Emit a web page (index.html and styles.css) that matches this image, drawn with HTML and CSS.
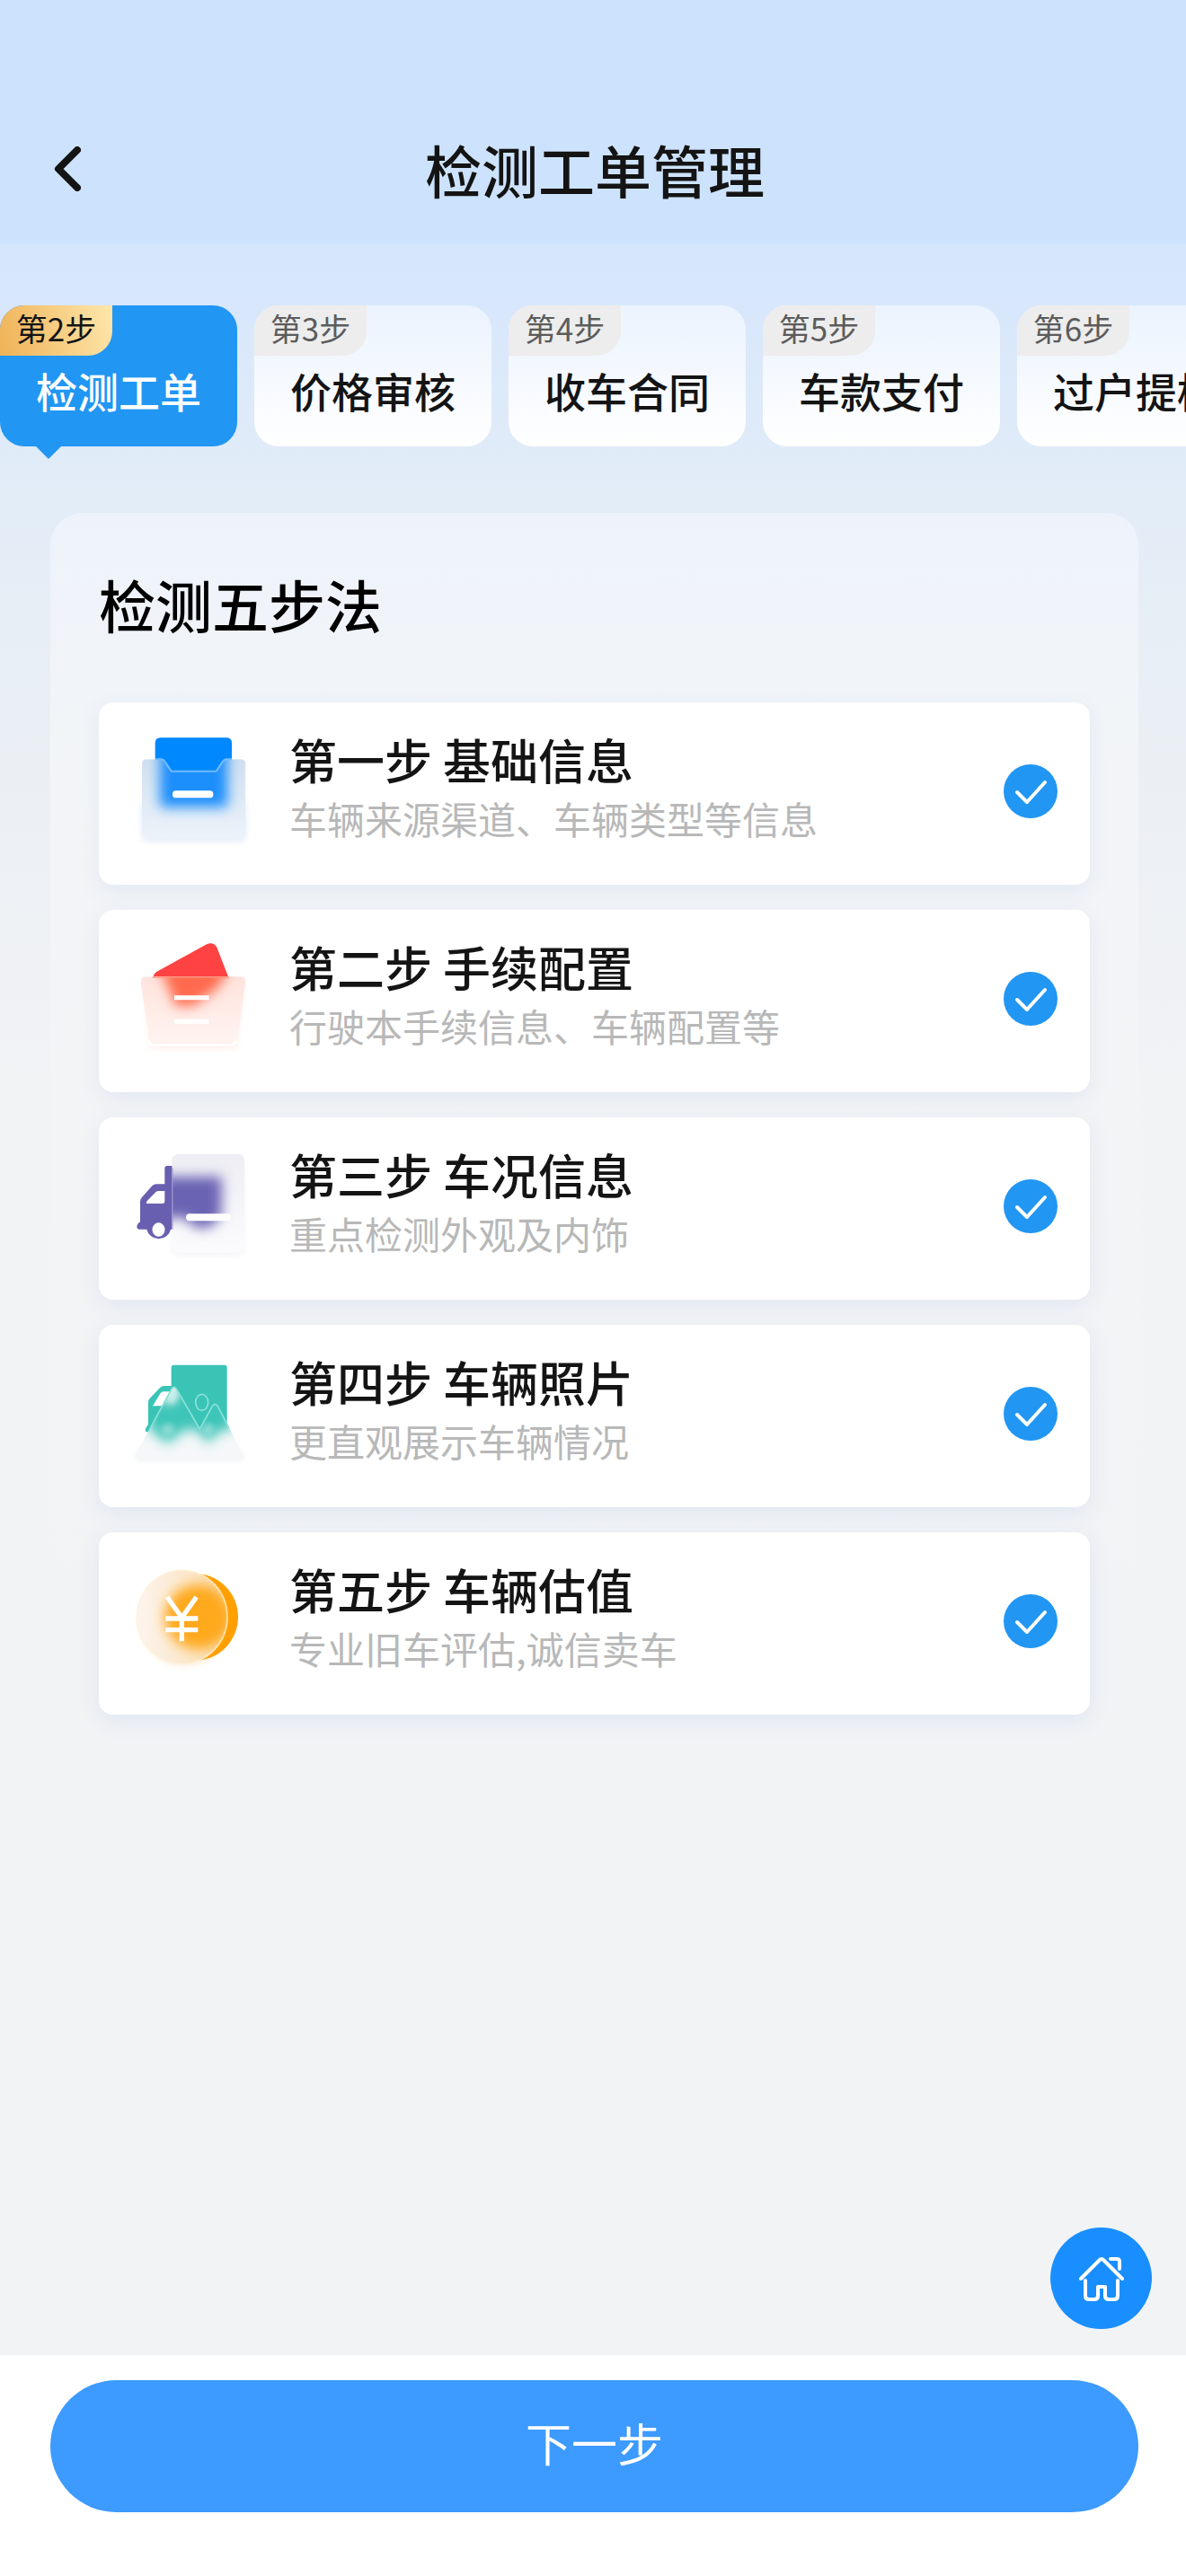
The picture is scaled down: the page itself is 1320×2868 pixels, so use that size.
FILE: index.html
```html
<!DOCTYPE html>
<html lang="zh-CN">
<head>
    <meta charset="UTF-8">
    <meta name="viewport" content="width=device-width, initial-scale=1.0">
    <title>检测工单管理</title>
    <link rel="stylesheet" href="styles.css">
</head>
<body>
    <header class="header">
        <button class="back" type="button" aria-label="返回">
            <svg viewBox="0 0 30 50"><path d="M26 4L5 25L26 46"/></svg>
        </button>
        <h1 class="title">检测工单管理</h1>
    </header>

    <nav class="tabs">
        <button class="tab active" type="button"><span class="badge">第2步</span><span class="tabName">检测工单</span></button>
        <button class="tab" type="button"><span class="badge">第3步</span><span class="tabName">价格审核</span></button>
        <button class="tab" type="button"><span class="badge">第4步</span><span class="tabName">收车合同</span></button>
        <button class="tab" type="button"><span class="badge">第5步</span><span class="tabName">车款支付</span></button>
        <button class="tab" type="button"><span class="badge">第6步</span><span class="tabName">过户提档</span></button>
    </nav>

    <main class="panel">
        <h2 class="panelTitle">检测五步法</h2>
        <div class="steps">
            <a class="step" href="#base">
                <svg class="icon" viewBox="60 78 390 390">
                    <defs>
                        <linearGradient id="boxFill" x1="0" y1="0" x2="0" y2="1">
                            <stop offset="0" stop-color="#cfdff0"/>
                            <stop offset="1" stop-color="#edf3fa"/>
                        </linearGradient>
                        <filter id="blur10" x="-30%" y="-30%" width="160%" height="160%"><feGaussianBlur stdDeviation="10"/></filter>
                        <filter id="blur20" x="-50%" y="-50%" width="200%" height="200%"><feGaussianBlur stdDeviation="20"/></filter>
                        <clipPath id="boxClip"><path d="M84 182q0-16 16-16h48q8 0 12 7l22 33h150l22-33q4-7 12-7h48q16 0 16 16v230q0 18-18 18H102q-18 0-18-18z"/></clipPath>
                    </defs>
                    <rect x="82" y="300" width="350" height="142" rx="20" fill="#e6eff9" filter="url(#blur10)"/>
                    <path d="M128 240V112q0-18 18-18h220q18 0 18 18v128z" fill="#0088ff"/>
                    <g clip-path="url(#boxClip)">
                        <rect x="80" y="160" width="352" height="272" fill="url(#boxFill)"/>
                        <rect x="144" y="110" width="226" height="216" rx="12" fill="#1a8ffc" filter="url(#blur20)"/>
                    </g>
                    <path d="M130 166h18q8 0 12 7l22 33h150l22-33q4-7 12-7h18" fill="none" stroke="#71bcff" stroke-width="6"/>
                    <rect x="186" y="271" width="136" height="24" rx="11" fill="#fff"/>
                </svg>
                <span class="info">
                    <span class="name">第一步 基础信息</span>
                    <span class="desc">车辆来源渠道、车辆类型等信息</span>
                </span>
                <svg class="check" viewBox="0 0 60 60"><circle cx="30" cy="30" r="30"/><path d="M15 31L26 42L46 20"/></svg>
            </a>
            <a class="step" href="#papers">
                <svg class="icon" viewBox="60 81 390 390">
                    <defs>
                        <linearGradient id="folderFill" x1="0" y1="0" x2="0" y2="1">
                            <stop offset="0" stop-color="#ffe3dc"/>
                            <stop offset="1" stop-color="#fff5f2"/>
                        </linearGradient>
                        <clipPath id="folderClip"><path d="M80 222q-2-20 18-20h314q20 0 18 20l-28 192q-3 20-22 20H132q-20 0-23-20z"/></clipPath>
                    </defs>
                    <path d="M92 260h330l-22 182H112z" fill="#fff0ec" filter="url(#blur10)"/>
                    <path d="M122 202q2-12 16-19L300 94q22-10 34 10l38 98z" fill="#ff4242"/>
                    <g clip-path="url(#folderClip)">
                        <rect x="76" y="196" width="360" height="244" fill="url(#folderFill)"/>
                        <path d="M140 160H386l-50 80-80 60h-60z" fill="#ff6a4e" filter="url(#blur20)"/>
                        <path d="M120 200h254" stroke="#ff8f78" stroke-width="12"/>
                    </g>
                    <path d="M106 416q4 15 26 15h244q18 0 24-15" fill="none" stroke="#fff" stroke-width="7"/>
                    <path d="M192 272h116M192 352h116" stroke="#fff" stroke-width="15"/>
                </svg>
                <span class="info">
                    <span class="name">第二步 手续配置</span>
                    <span class="desc">行驶本手续信息、车辆配置等</span>
                </span>
                <svg class="check" viewBox="0 0 60 60"><circle cx="30" cy="30" r="30"/><path d="M15 31L26 42L46 20"/></svg>
            </a>
            <a class="step" href="#condition">
                <svg class="icon" viewBox="60 84 390 390">
                    <defs>
                        <linearGradient id="cargoFill" x1="0" y1="0" x2="0" y2="1">
                            <stop offset="0" stop-color="#ededf3"/>
                            <stop offset="1" stop-color="#fcfcfe"/>
                        </linearGradient>
                        <clipPath id="cargoClip"><rect x="184" y="104" width="242" height="330" rx="22"/></clipPath>
                    </defs>
                    <rect x="184" y="140" width="242" height="304" rx="22" fill="#f6f6fa" filter="url(#blur10)"/>
                    <path fill-rule="evenodd" fill="#685fb0" d="M160 152q0-8 8-8h26v212h-14a41 41 0 0 1-80 0H76q-10 0-9-11 1-9 11-14v-68q0-8 6-14l34-38q6-6 14-6h28zM160 228h-20q-6 0-10 4l-28 28q-8 10 2 10h48q8 0 8-8zM139 334a21 23 0 1 0 1 0z"/>
                    <g clip-path="url(#cargoClip)">
                        <rect x="180" y="100" width="250" height="340" fill="url(#cargoFill)"/>
                        <path d="M140 180H350V310L310 350H260L230 318H140z" fill="#6b63b4" filter="url(#blur20)"/>
                    </g>
                    <path d="M186 150v206" stroke="#9a94cf" stroke-width="3"/>
                    <rect x="231" y="304" width="150" height="24" rx="12" fill="#fff"/>
                </svg>
                <span class="info">
                    <span class="name">第三步 车况信息</span>
                    <span class="desc">重点检测外观及内饰</span>
                </span>
                <svg class="check" viewBox="0 0 60 60"><circle cx="30" cy="30" r="30"/><path d="M15 31L26 42L46 20"/></svg>
            </a>
            <a class="step" href="#photos">
                <svg class="icon" viewBox="60 86 390 390">
                    <defs>
                        <clipPath id="hillClip"><path d="M56 432L182 198q9-16 18 0l77 134 42-78q9-12 18 0l92 178z"/></clipPath>
                    </defs>
                    <path d="M70 400h346l4 38H66z" fill="#eef2f3" filter="url(#blur10)"/>
                    <path fill-rule="evenodd" fill="#39c4b6" d="M182 126q0-8 8-8h170q8 0 8 8v206H112l-6 8q-8 6-11-4 0-6 10-20v-74q0-7 5-12l34-36q6-6 14-6h24zM180 207h-24q-6 0-10 5l-26 43h38z"/>
                    <g clip-path="url(#hillClip)">
                        <rect x="50" y="186" width="384" height="250" fill="#f6f7f9"/>
                        <path d="M90 200L176 250 210 200H390V330L340 340 305 380 270 335H225L170 380 110 335z" fill="#3cc5b8" filter="url(#blur20)"/>
                        <ellipse cx="184" cy="222" rx="16" ry="26" fill="#c9efeb" filter="url(#blur10)"/>
                        <circle cx="170" cy="335" r="22" fill="#8bdcd4" filter="url(#blur10)"/>
                        <circle cx="305" cy="335" r="20" fill="#8bdcd4" filter="url(#blur10)"/>
                    </g>
                    <path d="M106 340L182 200q9-16 18 0l77 132 42-76q9-14 18 0l36 70" fill="none" stroke="#8ce0d8" stroke-width="5"/>
                    <ellipse cx="284" cy="243" rx="21" ry="27" fill="none" stroke="#8ce0d8" stroke-width="5"/>
                </svg>
                <span class="info">
                    <span class="name">第四步 车辆照片</span>
                    <span class="desc">更直观展示车辆情况</span>
                </span>
                <svg class="check" viewBox="0 0 60 60"><circle cx="30" cy="30" r="30"/><path d="M15 31L26 42L46 20"/></svg>
            </a>
            <a class="step" href="#price">
                <svg class="icon" viewBox="60 89 390 390">
                    <defs>
                        <linearGradient id="coinFill">
                            <stop offset="0" stop-color="#fcf5f0"/>
                            <stop offset="1" stop-color="#fbdcae"/>
                        </linearGradient>
                        <clipPath id="coinClip"><ellipse cx="218" cy="270" rx="152" ry="157"/></clipPath>
                    </defs>
                    <ellipse cx="224" cy="284" rx="150" ry="150" fill="#fdeedb" filter="url(#blur10)"/>
                    <ellipse cx="262" cy="270" rx="143" ry="145" fill="#ffa000"/>
                    <g clip-path="url(#coinClip)">
                        <rect x="60" y="110" width="312" height="320" fill="url(#coinFill)"/>
                        <ellipse cx="272" cy="270" rx="112" ry="108" fill="#ffa91f" filter="url(#blur20)"/>
                    </g>
                    <ellipse cx="218" cy="270" rx="151" ry="156" fill="none" stroke="#fff1d8" stroke-opacity=".6" stroke-width="6"/>
                    <path d="M168 203L217 272L266 203M217 268v83M163 275h108M163 313h108" fill="none" stroke="#fff" stroke-width="16"/>
                </svg>
                <span class="info">
                    <span class="name">第五步 车辆估值</span>
                    <span class="desc">专业旧车评估,诚信卖车</span>
                </span>
                <svg class="check" viewBox="0 0 60 60"><circle cx="30" cy="30" r="30"/><path d="M15 31L26 42L46 20"/></svg>
            </a>
        </div>
    </main>

    <footer class="footer">
        <a class="home" href="#home" aria-label="首页">
            <svg viewBox="0 0 52 52"><path d="M3 26L24 5q2-2 4 0L49 26M36 4h7q3 0 3 3v8M8 28v17q0 4 4 4h6q4 0 4-4V35h8v10q0 4 4 4h6q4 0 4-4V28"/></svg>
        </a>
        <button class="next" type="button">下一步</button>
    </footer>
</body>
</html>
```
FILE: styles.css
```css
* {
    box-sizing: border-box;
}
body {
    margin: 0;
    min-height: 100vh;
    display: flex;
    flex-direction: column;
    font-family: "Noto Sans CJK SC", sans-serif;
    color: #141414;
    background: #f1f3f5 linear-gradient(#d3e5fd 0, #d6e6fc 300px, #e3edf7 570px, #ebeff4 850px, #f1f3f5 1200px) no-repeat;
    overflow-x: hidden;
}
button {
    border: none;
    padding: 0;
    font-family: inherit;
    color: inherit;
    cursor: pointer;
}
a {
    color: inherit;
    text-decoration: none;
}

/* header */
.header {
    display: grid;
    grid-template-columns: 90px 1fr 90px;
    padding: 104px 56px 0 60px;
    background: #cde3fd;
}
.back {
    background: none;
}
.back svg {
    display: block;
    width: 30px;
    height: 50px;
}
.back path {
    fill: none;
    stroke: #141414;
    stroke-width: 8;
    stroke-linecap: round;
    stroke-linejoin: round;
}
.title {
    margin: 0;
    text-align: center;
    font-size: 63px;
    line-height: 168px;
    font-weight: 500;
}

/* step tabs */
.tabs {
    display: flex;
    gap: 19px;
    padding: 68px 0 74px;
    overflow: hidden;
}
.tab {
    position: relative;
    flex: none;
    display: flex;
    flex-direction: column;
    width: 264px;
    height: 157px;
    border-radius: 27px;
    background: linear-gradient(#ebf3fe, #fff);
}
.badge {
    width: 125px;
    height: 56px;
    border-radius: 27px 0;
    background: #ededed;
    color: #5c5c5c;
    font-size: 35px;
    line-height: 50px;
    text-align: center;
}
.tabName {
    align-self: center;
    font-size: 46px;
    line-height: 76px;
    font-weight: 500;
}
.active {
    background: #2196f3;
    color: #fff;
}
.active .badge {
    background: linear-gradient(75deg, #efb257, #fee7ac);
    color: #141414;
}
.active::after {
    content: "";
    position: absolute;
    left: 40px;
    top: 100%;
    border: 14px solid transparent;
    border-top-color: #2196f3;
    border-bottom: none;
}

/* five steps */
.panel {
    flex: 1;
    margin: 0 53px 0 56px;
    padding: 58px 54px;
    border-radius: 36px;
    background: linear-gradient(#eef3fb 0, #f2f5f8 240px, #f3f4f6 600px, #f1f3f5 1200px);
}
.panelTitle {
    margin: 0 0 68px;
    color: #000;
    font-size: 63px;
    line-height: 85px;
    font-weight: 500;
}
.steps {
    display: grid;
    gap: 28px;
}
.step {
    display: flex;
    align-items: center;
    gap: 42px;
    min-height: 203px;
    padding: 0 36px 5px 40px;
    border-radius: 16px;
    background: #fff;
    box-shadow: 0 6px 24px rgba(80, 130, 220, .1);
}
.icon {
    flex: none;
    width: 130px;
    height: 130px;
    overflow: visible;
}
.info {
    flex: 1;
    display: flex;
    flex-direction: column;
    padding-bottom: 6px;
}
.name {
    font-size: 53px;
    line-height: 66px;
    font-weight: 500;
}
.desc {
    color: #b8b8b8;
    font-size: 42px;
    line-height: 66px;
}
.check {
    flex: none;
    width: 60px;
    height: 60px;
}
.check circle {
    fill: #2196f3;
}
.check path {
    fill: none;
    stroke: #fff;
    stroke-width: 4;
    stroke-linecap: round;
    stroke-linejoin: round;
}

/* bottom bar */
.footer {
    position: relative;
    padding: 28px 53px 71px 56px;
    background: #fff;
}
.home {
    position: absolute;
    right: 38px;
    bottom: 100%;
    display: grid;
    place-items: center;
    width: 113px;
    height: 113px;
    margin-bottom: 29px;
    border-radius: 50%;
    background: #198eff;
}
.home svg {
    width: 52px;
    height: 52px;
}
.home path {
    fill: none;
    stroke: #fff;
    stroke-width: 4;
    stroke-linecap: round;
    stroke-linejoin: round;
}
.next {
    display: block;
    width: 100%;
    height: 147px;
    padding-bottom: 10px;
    border-radius: 74px;
    background: #3d9aff;
    color: #fff;
    font-size: 51px;
}
```
